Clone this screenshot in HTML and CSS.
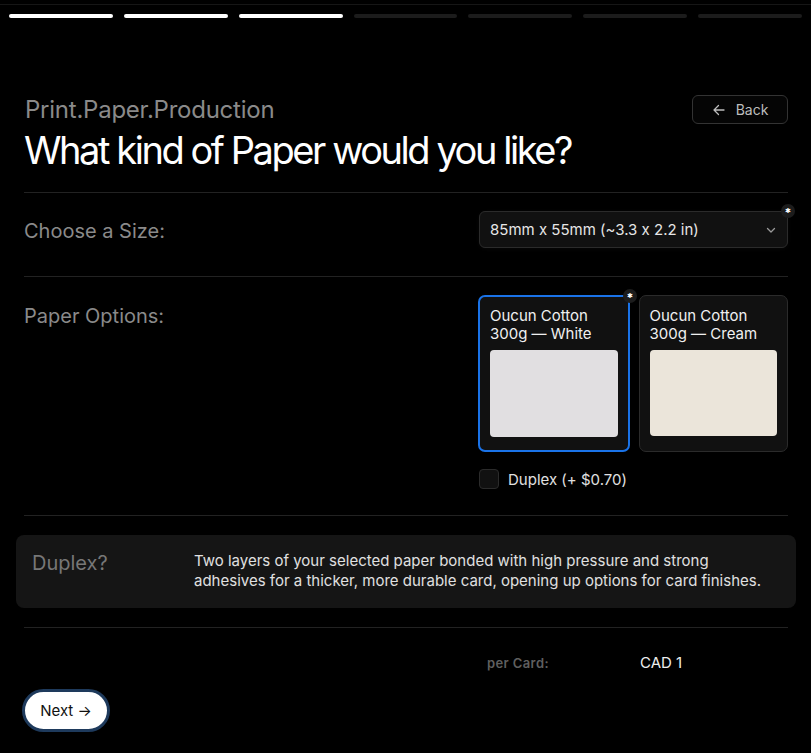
FILE: index.html
```html
<!DOCTYPE html>
<html lang="en">
<head>
<meta charset="utf-8">
<title>Print.Paper.Production</title>
<link rel="stylesheet" href="styles.css">
</head>
<body>
<div class="topline"></div>
<div class="progress">
  <span class="seg done"></span>
  <span class="seg done"></span>
  <span class="seg done"></span>
  <span class="seg"></span>
  <span class="seg"></span>
  <span class="seg"></span>
  <span class="seg"></span>
</div>
<main class="page">
  <header class="header">
    <div class="titles">
      <div class="brand">Print.Paper.Production</div>
      <h1 class="title">What kind of Paper would you like?</h1>
    </div>
    <button class="back">
      <svg width="14" height="14" viewBox="0 0 14 14" fill="none" stroke="currentColor" stroke-width="1.3" stroke-linecap="round" stroke-linejoin="round"><path d="M12 7H2M6.5 2.5L2 7l4.5 4.5"/></svg>
      <span>Back</span>
    </button>
  </header>

  <section class="row size-row">
    <div class="label">Choose a Size:</div>
    <div class="field">
      <div class="select">
        <span>85mm x 55mm (~3.3 x 2.2 in)</span>
        <svg width="12" height="12" viewBox="0 0 12 12" fill="none" stroke="#9a9a9a" stroke-width="1.3" stroke-linecap="round" stroke-linejoin="round"><path d="M2.5 4.5L6 8l3.5-3.5"/></svg>
      </div>
      <span class="req">&#x2731;</span>
    </div>
  </section>

  <section class="row paper-row">
    <div class="label">Paper Options:</div>
    <div class="field">
      <div class="cards">
        <div class="card selected">
          <div class="card-name">Oucun Cotton<br>300g — White</div>
          <div class="swatch white"></div>
          <span class="req">&#x2731;</span>
        </div>
        <div class="card">
          <div class="card-name">Oucun Cotton<br>300g — Cream</div>
          <div class="swatch cream"></div>
        </div>
      </div>
      <label class="check">
        <span class="box"></span>
        <span>Duplex (+ $0.70)</span>
      </label>
    </div>
  </section>

  <aside class="info">
    <div class="info-title">Duplex?</div>
    <p class="info-text">Two layers of your selected paper bonded with high pressure and strong adhesives for a thicker, more durable card, opening up options for card finishes.</p>
  </aside>

  <section class="price">
    <span class="price-label">per Card:</span>
    <span class="price-value">CAD 1</span>
  </section>

  <button class="next">Next &#x2192;</button>
</main>
</body>
</html>
```

FILE: styles.css
```css
* { box-sizing: border-box; }
html, body { margin: 0; padding: 0; }
body {
  background: #000;
  color: #eee;
  font-family: Inter, "Noto Sans", sans-serif;
  font-feature-settings: "calt" 0;
  width: 811px;
  height: 753px;
  overflow: hidden;
}
button { font-feature-settings: "calt" 0; }
.topline {
  height: 5px;
  border-bottom: 1px solid #161616;
}
.progress {
  display: flex;
  gap: 11px;
  padding: 9px 9px 0 9px;
}
.seg {
  flex: 1;
  height: 4px;
  border-radius: 2px;
  background: #1c1c1c;
}
.seg.done { background: #fff; }

.page {
  padding: 0 23px 0 24px;
}
.header {
  display: flex;
  justify-content: space-between;
  align-items: flex-start;
  padding: 78px 0 20px;
  border-bottom: 1px solid #222;
}
.brand {
  font-size: 24px;
  line-height: 28px;
  color: #8a8a8a;
  letter-spacing: -0.01em;
  padding-left: 1px;
}
.title {
  margin: 4px 0 0;
  font-size: 38px;
  line-height: 44px;
  font-weight: 400;
  color: #fff;
  letter-spacing: -0.064em;
}
.back {
  margin-top: -1px;
  display: flex;
  align-items: center;
  gap: 10px;
  width: 96px;
  height: 29px;
  justify-content: center;
  background: #050505;
  border: 1px solid #333;
  border-radius: 6px;
  color: #bdbdbd;
  font-family: inherit;
  font-size: 14px;
}

.row {
  display: grid;
  grid-template-columns: 455px 1fr;
  border-bottom: 1px solid #222;
}
.label {
  font-size: 20px;
  color: #8a8a8a;
  letter-spacing: 0;
  line-height: 40px;
}
.field { position: relative; }
.size-row { padding: 18px 0 25px; }
.select {
  height: 37px;
  background: #111;
  border: 1px solid #2b2b2b;
  border-radius: 6px;
  display: flex;
  align-items: center;
  justify-content: space-between;
  padding: 0 10px;
  font-size: 15px;
  color: #e6e6e6;
  box-shadow: 0 1px 4px rgba(255,255,255,0.03);
}
.req {
  position: absolute;
  width: 14px;
  height: 14px;
  border-radius: 50%;
  background: #1c1c1c;
  color: #fff;
  font-size: 7px;
  line-height: 14px;
  text-align: center;
  top: -7px;
  right: -7px;
}
.paper-row { padding: 18px 0 26px; }
.paper-row .label { line-height: 42px; }
.cards {
  display: grid;
  grid-template-columns: 1fr 1fr;
  gap: 9px;
  padding-left: 1px;
}
.card {
  position: relative;
  background: #111;
  border: 1px solid #2b2b2b;
  border-radius: 7px;
  padding: 11px 10px 12px;
}
.card.selected {
  border: 2px solid #1a73e8;
  padding: 10px 10px 13px;
  margin-left: -2px;
}
.card.selected .req { top: -8px; right: -9px; }
.card-name {
  font-size: 15px;
  line-height: 18px;
  color: #f0f0f0;
  margin-bottom: 7px;
}
.swatch {
  height: 87px;
  border-radius: 4px;
}
.swatch.white { background: #e1dfe1; }
.swatch.cream { background: #ebe5da; height: 86px; }
.check {
  display: flex;
  align-items: center;
  gap: 9px;
  margin-top: 17px;
  font-size: 15px;
  color: #e0e0e0;
}
.box {
  width: 20px;
  height: 20px;
  background: #111;
  border: 1px solid #2b2b2b;
  border-radius: 4px;
}

.info {
  margin: 19px -8px 0;
  background: #151515;
  border-radius: 8px;
  padding: 16px 16px 17px;
  display: flex;
  min-height: 73px;
}
.info-title {
  width: 162px;
  font-size: 20px;
  color: #777;
  line-height: 24px;
}
.info-text {
  margin: 0;
  font-size: 15px;
  line-height: 20px;
  color: #e0e0e0;
  max-width: 585px;
}

.price {
  margin-top: 19px;
  border-top: 1px solid #222;
  display: flex;
  align-items: center;
  padding: 25px 0 0 463px;
}
.price-label {
  width: 153px;
  font-size: 13px;
  font-weight: 600;
  color: #5f5f5f;
  letter-spacing: 0.03em;
}
.price-value {
  font-size: 15px;
  color: #eee;
}
.next {
  margin: 17px 0 0 -2px;
  width: 88px;
  height: 43px;
  border-radius: 22px;
  background: #fff;
  border: 3px solid #1e3a5c;
  color: #111;
  font-family: inherit;
  font-size: 15px;
}
```
